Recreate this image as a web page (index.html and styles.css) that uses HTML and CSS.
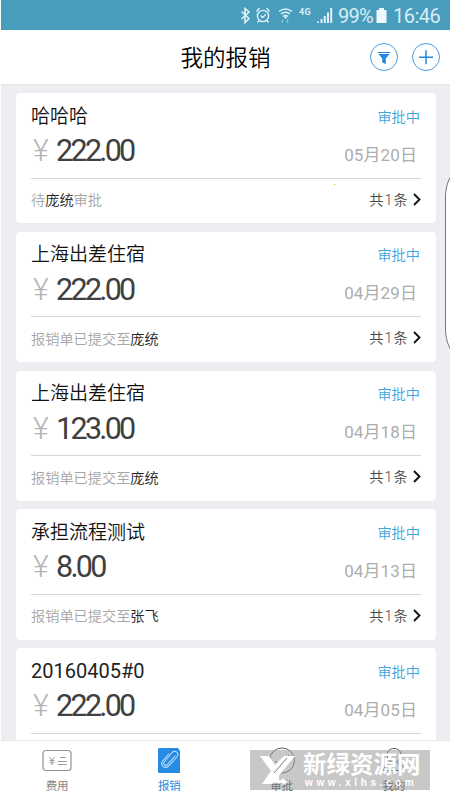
FILE: index.html
```html
<!DOCTYPE html>
<html lang="zh-CN">
<head>
<meta charset="utf-8">
<title>我的报销</title>
<link rel="stylesheet" href="styles.css">
</head>
<body>
<div class="app">
  <div class="status">
    <svg width="83" height="22" viewBox="0 0 83 22" fill="none" stroke="#e2f1f7">
      <path d="M1.500 7.500l7.500 7-4 4V4.500l4 3.500-7.500 7" stroke-width="1.600"/>
      <circle cx="23" cy="12" r="5.600" stroke-width="1.400"/>
      <path d="M16.500 7.500l3-3.500M29.500 7.500L26.500 4M19 16.500l-1.500 2M27 16.500l1.500 2M20.500 11.500l2.200 2 3-3" stroke-width="1.300"/>
      <path d="M39 7.500q6.500-5 13 0M41 10q4.500-3.500 9 0M43 12.500q2.500-2 5 0" stroke-width="1.500"/>
      <path d="M44.500 13h2l-1 1.500z" fill="#e2f1f7"/>
      <path d="M42.500 19v-3l-1.200 1.200M47.500 15.500v3.500l1.200-1.200" stroke="#9acbdc"/>
    </svg>
    <span class="net">4G</span>
    <svg class="signal" width="16" height="16" viewBox="0 0 16 16" fill="#e2f1f7"><path d="M0 13.500h2V15H0zM3.500 11h2v4h-2zM6.800 8h2v7h-2zM10 4.500h2V15h-2zM13.200 0h2v15h-2z"/></svg>
    <span class="pct">99%</span>
    <svg class="battery" width="11" height="15" viewBox="0 0 11 15" fill="#eef8fb"><path d="M3 0h5v2h2.500v13H.5V2H3z"/></svg>
    <span class="time">16:46</span>
  </div>
  <header class="header">
    <h1>我的报销</h1>
    <div class="actions">
      <svg width="28" height="28" viewBox="0 0 28 28"><circle cx="14" cy="14" r="13.500" fill="none" stroke="#4c9bdd"/><path d="M7.700 9.500h12.600" stroke="#2488e2" stroke-width="1"/><path d="M8.500 11h11l-3.700 4.500v5.800l-3.600-2v-3.800z" fill="#2488e2"/></svg>
      <svg width="28" height="28" viewBox="0 0 28 28" fill="none"><circle cx="14" cy="14" r="13.500" stroke="#4c9bdd"/><path d="M7 14.300h14M14 7.300v14" stroke="#2488d8" stroke-width="1.500"/></svg>
    </div>
  </header>
  <main class="list">
    <article class="card">
      <div class="row top"><h2>哈哈哈</h2><span class="state">审批中</span></div>
      <div class="row money"><div class="amount"><i>¥</i>222.00</div><time>05月20日</time></div>
      <div class="row foot"><p>待<b>庞统</b>审批</p><span class="count">共1条<svg width="8" height="13" viewBox="0 0 8 13"><path d="M1 1l5.500 5.500L1 12"/></svg></span></div>
    </article>
    <article class="card">
      <div class="row top"><h2>上海出差住宿</h2><span class="state">审批中</span></div>
      <div class="row money"><div class="amount"><i>¥</i>222.00</div><time>04月29日</time></div>
      <div class="row foot"><p>报销单已提交至<b>庞统</b></p><span class="count">共1条<svg width="8" height="13" viewBox="0 0 8 13"><path d="M1 1l5.500 5.500L1 12"/></svg></span></div>
    </article>
    <article class="card">
      <div class="row top"><h2>上海出差住宿</h2><span class="state">审批中</span></div>
      <div class="row money"><div class="amount"><i>¥</i>123.00</div><time>04月18日</time></div>
      <div class="row foot"><p>报销单已提交至<b>庞统</b></p><span class="count">共1条<svg width="8" height="13" viewBox="0 0 8 13"><path d="M1 1l5.500 5.500L1 12"/></svg></span></div>
    </article>
    <article class="card">
      <div class="row top"><h2>承担流程测试</h2><span class="state">审批中</span></div>
      <div class="row money"><div class="amount"><i>¥</i>8.00</div><time>04月13日</time></div>
      <div class="row foot"><p>报销单已提交至<b>张飞</b></p><span class="count">共1条<svg width="8" height="13" viewBox="0 0 8 13"><path d="M1 1l5.500 5.500L1 12"/></svg></span></div>
    </article>
    <article class="card">
      <div class="row top"><h2 class="latin">20160405#0</h2><span class="state">审批中</span></div>
      <div class="row money"><div class="amount"><i>¥</i>222.00</div><time>04月05日</time></div>
      <div class="row foot"></div>
    </article>
  </main>
  <nav class="tabs">
    <div class="tab">
      <svg width="30" height="28" viewBox="0 0 30 28" fill="none" stroke="#929292"><rect x="1" y="3.500" width="28" height="20" rx="3" stroke-width="1.200"/><path d="M7.500 10l2.500 3.500 2.500-3.500M10 13.500V18M7.500 13.500h5M7.500 15.700h5M18 10.500h6M16 14.500h9M16 17.500h9" stroke-width=".9"/></svg>
      <span>费用</span>
    </div>
    <div class="tab active">
      <svg width="30" height="28" viewBox="0 0 30 28" fill="none"><path d="M5.500 1h18.500l2 3v22H5.500q-1.500 0-1.500-1.500v-22Q4 1 5.500 1z" fill="#268be3"/><path d="M21 9l-7.500 8.500c-2 2-5-.3-3.300-2.500l8-9.500c3-3 7.500.5 5 4l-8.500 9.500c-4 3.500-9-1-6-5l6-7" stroke="#b9ddfa" stroke-width="1.100" stroke-linecap="round"/></svg>
      <span>报销</span>
    </div>
    <div class="tab">
      <svg width="30" height="28" viewBox="0 0 30 28" fill="none" stroke="#606060"><circle cx="15" cy="13.500" r="12.500"/><path d="M8 14l5 5 9-11"/></svg>
      <span class="dim">审批</span>
    </div>
    <div class="tab">
      <svg width="30" height="28" viewBox="0 0 30 28" fill="none" stroke="#555"><path d="M12 14.500C5 9 8 1.500 15 1.500s10 7.500 3 13c0 3 7 3 8 9H4c1-6 8-6 8-9z"/></svg>
      <span class="dim">我的</span>
    </div>
  </nav>
  <div class="edge"></div>
  <div class="speck"></div>
  <div class="watermark">
    <svg width="36" height="31" viewBox="0 0 36 31" fill="#fff"><path d="M0 1h9l6 9 9-9h11L12 29H2l9-13z"/><path d="M19 17v8h3v-2l6 4-5 3v-2h-8l-3-2z"/><path d="M27 3L14 18" stroke="#777" stroke-width="1"/></svg>
    <div class="brand"><strong>新绿资源网</strong><small>www.xlhs.com</small></div>
  </div>
</div>
</body>
</html>
```
FILE: styles.css
```css
* { box-sizing: border-box; }
body { margin: 0; background: #fff; font-family: Roboto, "Noto Sans CJK SC", sans-serif; }
h1, h2, p { margin: 0; font-weight: 400; }
svg { display: block; flex: none; }
.app { position: relative; width: 450px; height: 800px; overflow: hidden; display: flex; flex-direction: column; padding-left: 1px; }
.status { flex: none; height: 30px; background: #489dbd; color: #d9edf5; display: flex; align-items: center; padding-left: 239px; }
.status > svg:first-child { width: 83px; margin-right: -24px; }
.net { font-size: 9px; font-weight: 700; width: 16px; line-height: 10px; margin-bottom: 6px; letter-spacing: .3px; }
.signal { margin: 1px 5px 0 2px; }
.pct { font-size: 20px; width: 36px; letter-spacing: -.8px; padding-top: 2px; }
.battery { margin-left: 2px; }
.time { font-size: 20px; margin-left: 6px; letter-spacing: -.5px; padding-top: 2px; }
.header { flex: none; height: 54px; background: #fff; display: grid; grid-template-columns: 1fr auto 1fr; align-items: center; }
.header h1 { grid-column: 2; font-size: 22.500px; line-height: 30px; font-weight: 350; color: #000; padding-top: 1px; }
.actions { display: flex; gap: 14px; justify-content: flex-end; padding-right: 10px; }
.list { flex: 1; min-height: 0; overflow: hidden; background: #eeeef2; border-top: 1px solid #e6e6e9; padding: 8px 14px 0 15px; display: flex; flex-direction: column; gap: 8.500px; }
.card { flex: none; height: 130.300px; background: #fff; border-radius: 4px; padding: 8px 15px 0; box-shadow: 0 0 1px #e2e2e8; }
.row { display: flex; justify-content: space-between; align-items: center; }
.top { height: 28px; }
.top h2 { font-size: 19px; line-height: 28px; color: #111; font-weight: 350; padding-top: 3px; }
.top .latin { font-size: 20px; font-weight: 400; letter-spacing: 0; padding-top: 1px; color: #222; }
.state { font-size: 14.200px; color: #42a5dc; padding: 1px 1px 0 0; font-weight: 350; }
.money { height: 48.500px; padding-bottom: 4.500px; }
.amount { font-size: 30.500px; line-height: 44px; letter-spacing: -2.700px; color: #404040; display: flex; }
.amount i { width: 25px; padding-left: 2px; font-style: normal; font-weight: 300; color: #b5b5b5; }
.money time { font-size: 17px; color: #adadad; padding: 4px 4px 0 0; letter-spacing: .1px; }
.foot { height: 44px; border-top: 1px solid #d6d6da; font-size: 14.200px; color: #a6a6a6; padding-bottom: 1px; }
.foot p { font-weight: 350; padding-bottom: 1px; }
.foot b { font-weight: 350; color: #222; }
.count { display: flex; align-items: center; color: #484848; font-weight: 350; letter-spacing: 1.200px; line-height: 17px; padding-top: 1px; }
.count svg { margin: -2px 0 0 4px; fill: none; stroke: #111; stroke-width: 1.900; }
.tabs { flex: none; height: 60px; border-top: 1px solid #e5e5e7; background: #fff; display: grid; grid-template-columns: repeat(4, 1fr); }
.tab { display: flex; flex-direction: column; align-items: center; padding-top: 6px; font-size: 11.500px; line-height: 16px; color: #858585; gap: 3px; }
.active { color: #268be3; }
.dim { color: #555; }
.edge { position: absolute; left: 445px; top: 171px; width: 30px; height: 184px; background: #fff; border: 1px solid #777; border-radius: 14px / 26px; }
.speck { position: absolute; left: 334px; top: 184px; width: 1px; height: 1px; background: #a5b838; }
.watermark { position: absolute; left: 250px; top: 750px; width: 180px; height: 40px; background: rgba(145, 145, 145, .5); display: flex; align-items: center; padding-left: 10px; gap: 7px; color: #fff; }
.brand { display: flex; flex-direction: column; }
.brand strong { font-size: 23.500px; line-height: 24px; font-weight: 700; }
.brand small { font: 700 10px/11px "Liberation Sans", sans-serif; letter-spacing: 3.600px; padding-left: 2px; }
```
